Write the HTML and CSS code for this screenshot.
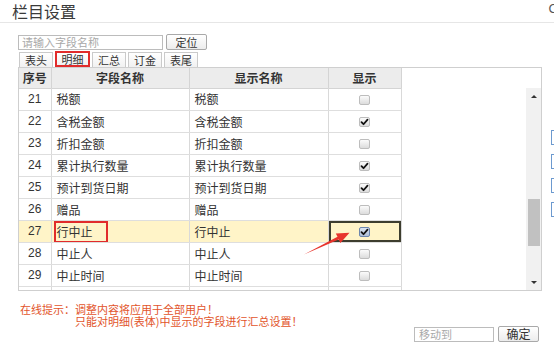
FILE: index.html
```html
<!DOCTYPE html>
<html lang="zh">
<head>
<meta charset="utf-8">
<title>栏目设置</title>
<link rel="stylesheet" href="styles.css">
</head>
<body>
<div class="page">
  <div class="topbar">
    <div class="title">栏目设置</div>
    <div class="close">C</div>
  </div>
  <div class="main">
    <div class="dialog">
      <div class="search">
        <input class="search-input" type="text" placeholder="请输入字段名称">
        <button class="btn">定位</button>
      </div>
      <div class="tabs">
        <div class="tab">表头</div>
        <div class="tab tab-marked">明细</div>
        <div class="tab">汇总</div>
        <div class="tab">订金</div>
        <div class="tab">表尾</div>
      </div>
      <div class="grid">
        <div class="grid-head">
          <table class="tbl">
            <colgroup><col class="c1"><col class="c2"><col class="c3"><col class="c4"></colgroup>
            <tr><th>序号</th><th>字段名称</th><th>显示名称</th><th>显示</th></tr>
          </table>
        </div>
        <div class="grid-body">
          <table class="tbl">
            <colgroup><col class="c1"><col class="c2"><col class="c3"><col class="c4"></colgroup>
            <tr><td class="num">21</td><td>税额</td><td>税额</td><td class="chk"><span class="cb"></span></td></tr>
            <tr><td class="num">22</td><td>含税金额</td><td>含税金额</td><td class="chk"><span class="cb on"><svg viewBox="0 0 10 9"><path d="M1.6 4.6 L3.9 7 L8.4 1.8" /></svg></span></td></tr>
            <tr><td class="num">23</td><td>折扣金额</td><td>折扣金额</td><td class="chk"><span class="cb"></span></td></tr>
            <tr><td class="num">24</td><td>累计执行数量</td><td>累计执行数量</td><td class="chk"><span class="cb on"><svg viewBox="0 0 10 9"><path d="M1.6 4.6 L3.9 7 L8.4 1.8" /></svg></span></td></tr>
            <tr><td class="num">25</td><td>预计到货日期</td><td>预计到货日期</td><td class="chk"><span class="cb on"><svg viewBox="0 0 10 9"><path d="M1.6 4.6 L3.9 7 L8.4 1.8" /></svg></span></td></tr>
            <tr><td class="num">26</td><td>赠品</td><td>赠品</td><td class="chk"><span class="cb"></span></td></tr>
            <tr class="hl"><td class="num">27</td><td class="annot-cell">行中止<span class="annot"></span></td><td>行中止</td><td class="chk sel"><span class="cb on focus"><svg viewBox="0 0 10 9"><path d="M1.6 4.6 L3.9 7 L8.4 1.8" /></svg></span></td></tr>
            <tr><td class="num">28</td><td>中止人</td><td>中止人</td><td class="chk"><span class="cb"></span></td></tr>
            <tr><td class="num">29</td><td>中止时间</td><td>中止时间</td><td class="chk"><span class="cb"></span></td></tr>
            <tr class="last"><td class="num"><div class="clip">30</div></td><td><div class="clip">来源单据</div></td><td><div class="clip">来源单据</div></td><td class="chk"><div class="clip"><span class="cb"></span></div></td></tr>
          </table>
          <div class="sb">
            <span class="sb-up"></span>
            <span class="sb-thumb"></span>
            <span class="sb-fill"></span>
            <span class="sb-down"></span>
          </div>
        </div>
      </div>
      <div class="notes">
        <div class="note-line"><span class="note-label">在线提示：</span><span>调整内容将应用于全部用户！</span></div>
        <div class="note-line"><span class="note-label"></span><span>只能对明细(表体)中显示的字段进行汇总设置！</span></div>
      </div>
      <div class="actions">
        <input class="move-input" type="text" placeholder="移动到">
        <button class="btn">确定</button>
      </div>
    </div>
    <div class="side">
      <span class="side-btn"></span>
      <span class="side-btn"></span>
      <span class="side-btn"></span>
      <span class="side-btn"></span>
    </div>
  </div>
  <svg class="arrow" viewBox="0 0 554 352" width="554" height="352">
    <polygon points="304,254.5 337.5,236.7 335.8,233.4 349.5,232.8 340.4,242.9 338.7,239.5" />
  </svg>
</div>
</body>
</html>
```
FILE: styles.css
```css
* { box-sizing: border-box; }
html, body { margin: 0; padding: 0; background: #fff; }
body {
  font-family: "Liberation Sans", "Noto Sans CJK SC", sans-serif;
  color: #333;
  font-size: 12px;
}
.page {
  position: relative;
  width: 554px;
  height: 352px;
  overflow: hidden;
}
.topbar {
  height: 23px;
  border-bottom: 1px solid #e6e6e6;
  display: flex;
  justify-content: space-between;
  align-items: flex-start;
}
.title {
  padding-left: 12px;
  font-size: 16px;
  line-height: 22px;
  color: #3a3a3a;
  font-family: "Noto Sans CJK SC", sans-serif;
}
.close {
  font-size: 13px;
  line-height: 18px;
  color: #555;
  margin-right: -4px;
}
.main { display: flex; }
.dialog {
  flex: none;
  width: 551px;
  padding-left: 18px;
}
.search {
  display: flex;
  align-items: center;
  margin-top: 11px;
  height: 16px;
}
.search-input {
  width: 145px;
  height: 15px;
  border: 1px solid #bcbcbc;
  padding: 0 3px;
  margin: 0;
  font-family: "Noto Sans CJK SC", sans-serif;
  font-size: 11px;
  color: #333;
  outline: none;
}
.search-input::placeholder, .move-input::placeholder { color: #a8a8a8; }
.btn {
  margin: 0 0 0 3px;
  width: 41px;
  height: 16px;
  padding: 0;
  border: 1px solid #a9a9a9;
  border-radius: 2px;
  background: linear-gradient(#ffffff, #ececec);
  font-family: "Noto Sans CJK SC", sans-serif;
  font-size: 11px;
  line-height: 14px;
  color: #333;
}
.tabs {
  display: flex;
  align-items: flex-end;
  gap: 2px;
  margin-top: 1px;
  padding-left: 1px;
  height: 16px;
}
.tab {
  width: 34px;
  height: 15px;
  border: 1px solid #cacaca;
  border-bottom: none;
  background: linear-gradient(#ffffff, #f1f1f1);
  font-family: "Noto Sans CJK SC", sans-serif;
  font-size: 11px;
  line-height: 14px;
  text-align: center;
  color: #333;
}
.tab-marked {
  width: 35px;
  height: 16px;
  border: 2px solid #e12b2b;
  line-height: 12px;
}
.grid {
  width: 524px;
  height: 224px;
  border: 1px solid #cfcfcf;
  display: flex;
  flex-direction: column;
  overflow: hidden;
}
.grid-head { flex: none; height: 20px; }
.tbl {
  width: 382px;
  table-layout: fixed;
  border-collapse: collapse;
  font-family: "Liberation Sans", "Noto Sans CJK SC", sans-serif;
}
.c1 { width: 32px; }
.c2 { width: 138px; }
.c3 { width: 139px; }
.c4 { width: 73px; }
.tbl th {
  height: 20px;
  padding: 0;
  background: #ececec;
  border-right: 1px solid #d4d4d4;
  border-bottom: 1px solid #d4d4d4;
  font-size: 12px;
  font-weight: bold;
  color: #333;
  text-align: center;
  font-family: "Noto Sans CJK SC", sans-serif;
}
.grid-body {
  flex: 1;
  display: flex;
  overflow: hidden;
  align-items: flex-start;
}
.tbl td {
  height: 22px;
  padding: 0 0 0 5px;
  border-right: 1px solid #d9d9d9;
  border-bottom: 1px solid #dedede;
  font-size: 12px;
  color: #333;
  white-space: nowrap;
  overflow: hidden;
}
.tbl td.num { text-align: center; padding: 0; }
.tbl td.chk { text-align: center; padding: 0; }
.tbl tr.last td {
  height: 7px;
  border-bottom: none;
  vertical-align: top;
}
.clip {
  height: 7px;
  overflow: hidden;
  line-height: 16px;
  padding-top: 2px;
}
.tbl tr.hl td { background: #fff4c8; }
.tbl td.sel { box-shadow: inset 0 0 0 2px #3d3d2e; }
.annot-cell { position: relative; }
.annot {
  position: absolute;
  left: 2px;
  top: 0;
  width: 54px;
  height: 22px;
  border: 2px solid #e12b2b;
}
.cb {
  display: inline-block;
  vertical-align: middle;
  width: 11px;
  height: 10px;
  border: 1px solid #bdbdbd;
  border-radius: 2px;
  background: linear-gradient(#fbfbfb, #dcdcdc);
  position: relative;
}
.cb svg {
  position: absolute;
  left: 0;
  top: 0;
  width: 9px;
  height: 8px;
}
.cb svg path {
  fill: none;
  stroke: #111;
  stroke-width: 2;
  stroke-linecap: round;
  stroke-linejoin: round;
}
.cb.focus {
  border-color: #6c86ad;
  background: linear-gradient(#dbe5f2, #aebfd8);
}
.sb {
  flex: none;
  margin-left: auto;
  width: 15px;
  height: 100%;
  background: #f1f1f1;
  display: flex;
  flex-direction: column;
  align-items: center;
}
.sb-up {
  margin-top: 7px;
  width: 0;
  height: 0;
  border-left: 3px solid transparent;
  border-right: 3px solid transparent;
  border-bottom: 3px solid #333;
}
.sb-thumb {
  margin-top: 101px;
  width: 12px;
  height: 47px;
  background: #c1c1c1;
}
.sb-fill { flex: 1; }
.sb-down {
  margin-bottom: 6px;
  width: 0;
  height: 0;
  border-left: 3px solid transparent;
  border-right: 3px solid transparent;
  border-top: 3px solid #333;
}
.notes {
  margin-top: 12px;
  padding-left: 2px;
  color: #e2542b;
  font-family: "Noto Sans CJK SC", sans-serif;
  font-size: 11px;
  line-height: 12px;
}
.note-line { display: flex; white-space: nowrap; }
.note-label { width: 55px; flex: none; }
.actions {
  width: 521px;
  margin-top: -1px;
  display: flex;
  justify-content: flex-end;
  align-items: center;
}
.move-input {
  width: 80px;
  height: 15px;
  border: 1px solid #bcbcbc;
  padding: 0 4px;
  margin: 0;
  font-family: "Noto Sans CJK SC", sans-serif;
  font-size: 11px;
  outline: none;
}
.actions .btn { margin-left: 4px; font-size: 12px; }
.side {
  flex: none;
  display: flex;
  flex-direction: column;
  gap: 9px;
  padding-top: 107px;
}
.side-btn {
  display: block;
  width: 14px;
  height: 15px;
  border: 1px solid #6d9acf;
  background: #fff;
}
.arrow {
  position: absolute;
  left: 0;
  top: 0;
  pointer-events: none;
}
.arrow polygon { fill: #e8342c; }
```
